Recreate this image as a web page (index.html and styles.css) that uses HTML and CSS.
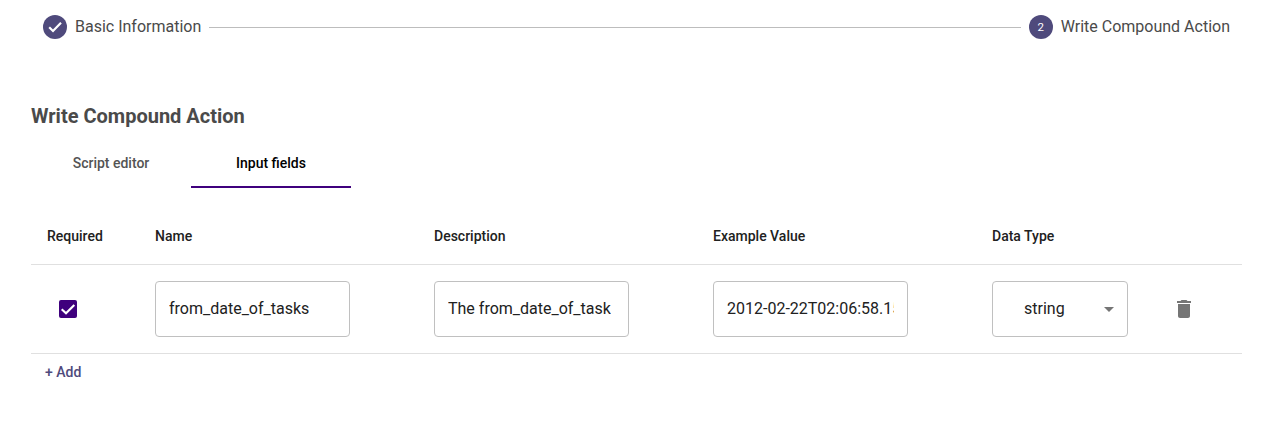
FILE: index.html
```html
<!DOCTYPE html>
<html lang="en">
<head>
<meta charset="utf-8">
<title>Write Compound Action</title>
<link rel="stylesheet" href="styles.css">
</head>
<body>
<nav class="stepper">
  <div class="step"><span class="step-icon"><svg width="24" height="24" viewBox="0 0 24 24"><path d="M6.2 12.3 10 16l8-8.2" fill="none" stroke="#fff" stroke-width="2.2"/></svg></span><span class="step-label">Basic Information</span></div>
  <div class="step-line"></div>
  <div class="step"><span class="step-icon">2</span><span class="step-label">Write Compound Action</span></div>
</nav>
<main class="content">
  <h1 class="title">Write Compound Action</h1>
  <div class="tabs">
    <button class="tab">Script editor</button>
    <button class="tab tab-active">Input fields</button>
  </div>
  <section class="table">
    <div class="row header">
      <span>Required</span><span>Name</span><span>Description</span><span>Example Value</span><span>Data Type</span><span></span>
    </div>
    <div class="row fields">
      <span class="checkbox"><svg width="18" height="18" viewBox="0 0 18 18"><rect width="18" height="18" rx="2" fill="#3f007d"/><path d="M2.7 9.2 7 13.3l8.3-8.4" fill="none" stroke="#fff" stroke-width="2.1"/></svg></span>
      <div class="input"><span class="value">from_date_of_tasks</span></div>
      <div class="input"><span class="value">The from_date_of_task</span></div>
      <div class="input"><span class="value">2012-02-22T02:06:58.15</span></div>
      <div class="select"><span class="value">string</span><svg width="10" height="5" viewBox="0 0 10 5"><path d="M0 0h10L5 5z" fill="#757575"/></svg></div>
      <svg class="trash" width="24" height="24" viewBox="0 0 24 24"><path d="M6 19c0 1.1.9 2 2 2h8c1.1 0 2-.9 2-2V7H6v12zM19 4h-3.5l-1-1h-5l-1 1H5v2h14V4z" fill="#757575"/></svg>
    </div>
  </section>
  <button class="add">+ Add</button>
</main>
</body>
</html>
```
FILE: styles.css
```css
* { box-sizing: border-box; }
body { margin: 0; background: #fff; color: #212121; font-family: Roboto, sans-serif; }
button { border: 0; background: none; padding: 0; font: 500 14px/20px Roboto, sans-serif; }
.stepper { display: flex; align-items: center; height: 54px; padding: 0 47px 0 43px; gap: 8px; }
.step { display: flex; align-items: center; gap: 8px; font-size: 16px; color: #4a4a4a; white-space: nowrap; }
.step-label { line-height: 20px; }
.step-icon { display: flex; align-items: center; justify-content: center; width: 24px; height: 24px; border-radius: 50%; background: #4f4a7c; color: #fff; font-size: 11.5px; }
.step-line { flex: 1; height: 1px; background: #bdbdbd; }
.content { padding: 49px 35px 0 31px; }
.title { margin: 0; font-size: 20px; font-weight: 700; line-height: 27px; color: #4a4a4a; }
.tabs { display: flex; height: 48px; margin-top: 10px; }
.tab { width: 160px; height: 48px; border-bottom: 2px solid transparent; color: #545454; }
.tab-active { color: #000; border-bottom-color: #3f007d; }
.table { margin-top: 20px; }
.row { display: grid; grid-template-columns: 108px 279px 279px 279px 180px 1fr; align-items: center; padding-left: 16px; border-bottom: 1px solid #e0e0e0; }
.header { height: 57px; font-size: 14px; font-weight: 500; }
.fields { height: 89px; }
.checkbox { display: flex; padding-left: 12px; }
.input { width: 195px; height: 56px; border: 1px solid #c0c0c0; border-radius: 4px; padding: 0 13px; display: flex; align-items: center; }
.value { overflow: hidden; white-space: nowrap; font-size: 16px; line-height: 24px; }
.select { display: flex; align-items: center; justify-content: space-between; width: 136px; height: 56px; border: 1px solid #c0c0c0; border-radius: 4px; padding: 0 13px 0 31px; }
.trash { display: block; }
.add { display: block; margin: 8px 0 0 14px; color: #4f4a7c; }
```
